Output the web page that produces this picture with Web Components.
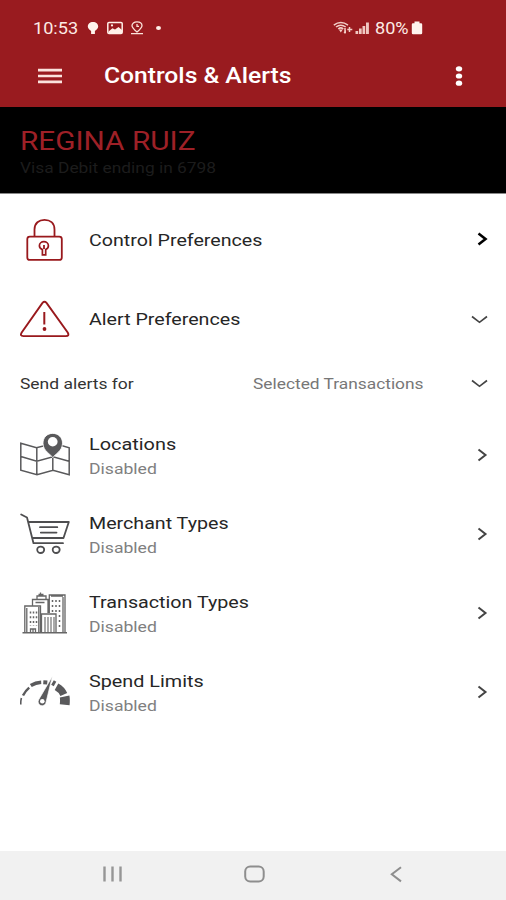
<!DOCTYPE html>
<html lang="en">
<head>
<meta charset="utf-8">
<title>Controls &amp; Alerts</title>
<style>
html, body { margin: 0; height: 100%; background: #fff; font-family: Roboto, "Liberation Sans", sans-serif; }
</style>
</head>
<body>
<phone-screen></phone-screen>
<script>
const define = (name, html, setup) => customElements.define(name, class extends HTMLElement {
  connectedCallback() {
    if (this.shadowRoot) return;
    const t = document.createElement('template');
    t.innerHTML = typeof html === 'function' ? html(this) : html;
    this.attachShadow({ mode: 'open' }).append(t.content.cloneNode(true));
    if (setup) setup(this);
  }
});

// A single line of text, widened to the width given in the w attribute.
define('wide-text', `<style>
  :host { display: block; flex: none; white-space: nowrap; line-height: 24px; }
  span { display: inline-block; transform-origin: 0 50%; vertical-align: top; }
</style><span><slot></slot></span>`, el => {
  const w = +el.getAttribute('w');
  const span = el.shadowRoot.querySelector('span');
  el.style.width = w + 'px';
  span.style.transform = `scaleX(${w / span.offsetWidth})`;
});

const icons = {
  lock: [50, 50, `<g fill="none" stroke="#99191d" stroke-width="1.8"><path d="M14.500 20V13.500C14.500 7 19 3.800 24.500 3.800S34.500 7 34.500 13.500V20"/><rect x="7.300" y="20.600" width="34.500" height="23.300" rx="2.500"/><path stroke-width="1.700" d="M22.400 33.600c-2-.9-3-2.400-3-3.900 0-2.400 2-4 4.500-4s4.500 1.600 4.500 4c0 1.500-.9 3-2.700 3.900v5.200h-3.300z"/><path d="M24 29v4"/></g>`],
  warning: [50, 50, `<path d="M22.500 7.900Q24.500 5.700 26.500 7.900L47.700 37.500Q49.700 41.100 45.800 41.100H3.400Q-.5 41.100 1.700 37.500Z" fill="none" stroke="#99191d" stroke-width="1.900"/><path d="M24.300 17v12.500" stroke="#99191d" stroke-width="2"/><circle cx="24.500" cy="34" r="1.900" fill="#99191d"/>`],
  map: [50, 50, `<g transform="translate(0 3.700)"><g fill="none" stroke="#59595b" stroke-width="1.500"><path d="M.8 9.500 16.500 14 34 9.500 49.200 14V41L33 36.500 17 41 .8 36.500ZM16.800 14V41M32.800 24V37M.8 22.800 16.800 27.500 33 23 49 27.500"/></g><path d="M32.800 24C31 20.500 23 17.500 23 9.500 23 3.500 27.300-.3 32.700-.3S42.500 3.500 42.500 9.500C42.500 17.500 34.600 20.500 32.800 24Z" fill="#59595b" stroke="#fff" stroke-width=".8"/><ellipse cx="32.700" cy="8" rx="4.900" ry="4.700" fill="#fff"/></g>`],
  cart: [50, 50, `<g fill="none" stroke="#4e4e50" stroke-width="1.800" stroke-linecap="round" stroke-linejoin="round"><path d="M1.200 5.500 7 8.500 13.500 34.200H43M8.300 13H48.800L43.500 29H12.800M20 18.200H37.300M20.800 23.600H36.500"/><ellipse cx="20.700" cy="40.800" rx="3.500" ry="3.200"/><ellipse cx="36.200" cy="40.800" rx="3.500" ry="3.200"/></g>`],
  city: [50, 50, `<g fill="none" stroke="#666" stroke-width="1.300"><path d="M2.500 44.800H47" stroke-width="1.600"/><path d="M4.800 44V18H20.500V44M6.800 44V20M18.800 44V19M12.500 17.500V11.500H28V25M17 11V8H26V11M20.500 8V4.500M18.500 6.500h5M29.300 25V7H45V44M43 44V9M31 8h12M21.500 44V26H36V44M15.500 14.500h9"/><path d="M25 29V44M28 29V44M31 29V44M34 29V44" stroke-width="1.100"/><path d="M10.500 23.500V38M13.500 23.500V38M16.500 23.500V38" stroke-dasharray="2 2.700" stroke-width="1.500"/><path d="M32.500 12v12M36 12v12M39.500 12v30" stroke-dasharray="2 3" stroke-width="1.500"/><path d="M10.500 44V41h5v3M13 41v3"/></g>`],
  gauge: [50, 50, `<g fill="none" stroke="#5a5a5c"><path d="M.8 37.500Q.6 34 1.400 31" stroke-width="1.600"/><path d="M3 28.500Q5.500 23.700 9.200 20.600" stroke-width="2.500"/><path d="M10.800 18.500Q15.500 15.500 21.200 15.200" stroke-width="3.500"/><path d="M23.300 15.200 27.300 15.500" stroke-width="3.900"/><path d="M32.500 15.500 35 17" stroke-width="5"/><path d="M36.500 19.800Q41.500 22.500 43.800 27.500" stroke-width="7.500"/><path d="M44.600 29.500Q45.200 32.500 44.700 37.700" stroke-width="9.800"/></g><path d="M32.300 9.500 18.800 32.500a4 4 0 1 0 7.300 2.500Z" fill="#5a5a5c" stroke="#fff" stroke-width=".7"/><circle cx="22.300" cy="34.300" r="2.300" fill="#fff"/>`],
  right: [18, 18, `<path d="M6.500 3.500 13.500 9 6.500 14.500" fill="none" stroke="currentColor" stroke-width="var(--weight, 2)"/>`],
  down: [18, 18, `<path d="M2 5.500 9.500 11.300 17 5.500" fill="none" stroke="currentColor" stroke-width="1.700"/>`],
  menu: [24, 16, `<path d="M0 2.200H24M0 8H24M0 13.800H24" stroke="#fbe3dd" stroke-width="2.700"/>`],
  more: [8, 24, `<g fill="#fff"><ellipse cx="4" cy="4.800" rx="3.200" ry="2.600"/><ellipse cx="4" cy="12" rx="3.200" ry="2.600"/><ellipse cx="4" cy="19.200" rx="3.200" ry="2.600"/></g>`],
  bulb: [12, 16, `<path d="M6 2C2.900 2 .8 4 .8 6.600c0 2 1.700 3.200 3.300 4.400V14h3.800v-3c1.600-1.200 3.300-2.400 3.300-4.400C11.200 4 9.100 2 6 2Z" fill="#fff3eb"/>`],
  picture: [16, 16, `<rect x=".8" y="2.400" width="14.400" height="11" rx="1.200" fill="none" stroke="#fff0e8" stroke-width="1.500"/><path d="M1.500 11.500 5.500 8.200 8 9.400 11.500 7 15 10v3H1.500Z" fill="#fff0e8"/><circle cx="5" cy="5.400" r="1.100" fill="#fff0e8"/>`],
  place: [14, 16, `<g fill="none" stroke="#fbe3da" stroke-width="1.300"><path d="M7 12C3.500 9 2 7.500 2 5.700 2 3.500 4 1.800 7 1.800s5 1.700 5 3.900C12 7.500 10.500 9 7 12ZM1 13.600H13"/><path d="M7 3.900v2.500h2"/></g>`],
  wifi: [20, 16, `<g fill="none" stroke="#f3cfc8" stroke-width="1.500"><path d="M.8 5.200Q7.800 0 15 5.200M3 7Q7.800 3.300 12.700 7M5.200 9Q7.800 6.800 10.300 9"/></g><path d="M5.800 9.500H9.800L7.800 12.500ZM10.500 13 13 9.500V13Z" fill="#f3cfc8"/><path d="M12 8v5.500M16.500 7v5M14.300 9.500h5" stroke="#f3cfc8" stroke-width="1.500"/>`],
  signal: [15, 16, `<g fill="#f0c8c1"><path d="M.5 11h2.700v3H.5zM4 8.500h2.700V14H4zM7.500 6h2.700v8H7.500zM11 2.500h2.900v11.500h-2.900z"/></g>`],
  battery: [12, 16, `<path d="M3.500 1.500h5v1.700h1.500q1.200 0 1.200 1.200V13q0 1.200-1.200 1.200H2Q.8 14.200.8 13V4.400Q.8 3.200 2 3.200h1.500Z" fill="#fff5ef"/>`],
  recents: [20, 18, `<path d="M2.500 1.500V16.500M10.500 1.500V16.500M18.500 1.500V16.500" stroke="#969696" stroke-width="2.400"/>`],
  home: [22, 20, `<rect x="2.200" y="2.600" width="18.500" height="15" rx="5" fill="none" stroke="#8e8e8e" stroke-width="2"/>`],
  back: [12, 18, `<path d="M11 2.200 1.800 9.300 11 16.400" fill="none" stroke="#8e8e8e" stroke-width="2"/>`]
};
define('app-icon', el => {
  const [w, h, body] = icons[el.getAttribute('name')];
  return `<style>:host{display:block;flex:none;width:${w}px;height:${h}px}svg{display:block}</style>
  <svg width="${w}" height="${h}" viewBox="0 0 ${w} ${h}">${body}</svg>`;
});

define('status-bar', `<style>
  :host { display: flex; align-items: center; height: 24px; padding: 16px 83px 0 33px; color: #fdebe5; font-size: 16.5px; }
  .left, .right { display: flex; align-items: center; }
  .right { margin-left: auto; }
  wide-text { padding-top: 1px; }
  .dot { width: 5px; height: 4px; border-radius: 50%; background: #fff0e8; margin-left: 12px; }
</style>
<div class="left"><wide-text w="45">10:53</wide-text>
<app-icon name="bulb" style="margin-left:9px"></app-icon>
<app-icon name="picture" style="margin-left:8px"></app-icon>
<app-icon name="place" style="margin-left:7px"></app-icon>
<div class="dot"></div></div>
<div class="right"><app-icon name="wifi"></app-icon>
<app-icon name="signal" style="margin-left:2px"></app-icon>
<wide-text w="34" style="margin-left:5px">80%</wide-text>
<app-icon name="battery" style="margin-left:2px"></app-icon></div>`);

define('title-bar', `<style>
  :host { display: flex; align-items: center; height: 46px; padding: 13px 43px 7px 38px; color: #fff; }
  wide-text { margin-left: 42px; font-size: 22px; font-weight: 500; }
  .more { margin-left: auto; }
</style>
<app-icon name="menu"></app-icon><wide-text w="187">Controls &amp; Alerts</wide-text><app-icon class="more" name="more"></app-icon>`);

define('card-banner', `<style>
  :host { display: block; box-sizing: border-box; height: 87px; padding: 21px 20px 0; background: #000; border-bottom: 1px solid #888; }
  .name { color: #9e2027; font-size: 25px; line-height: 28px; }
  .card { color: #1c1c1c; font-size: 15.5px; line-height: 24px; }
</style>
<wide-text class="name" w="175">REGINA RUIZ</wide-text>
<wide-text class="card" w="196">Visa Debit ending in 6798</wide-text>`);

define('menu-row', el => `<style>
  :host { display: flex; align-items: center; height: 79px; padding: 0 16px 0 20px; font-size: 16px; color: #262626; }
  .text { margin-left: 19px; }
  .arrow { margin-left: auto; color: #444; }
  :host([strong]) .arrow { color: #000; --weight: 2.6; }
  :host([strong]) .arrow, :host([sub]) app-icon { padding-bottom: 3px; }
  ::slotted([slot=detail]) { font-size: 15px; color: #808080; }
</style>
<app-icon name="${el.getAttribute('icon')}"></app-icon>
<div class="text"><slot></slot><slot name="detail"></slot></div>
<app-icon class="arrow" name="${el.getAttribute('arrow') || 'right'}"></app-icon>`);

define('select-row', `<style>
  :host { display: flex; align-items: center; height: 48px; padding: 0 18px 0 20px; margin-bottom: 9px; font-size: 15px; color: #333; }
  .value { margin-left: 119px; color: #777; }
  app-icon { margin-left: auto; color: #444; }
</style>
<wide-text w="114">Send alerts for</wide-text><wide-text class="value" w="171">Selected Transactions</wide-text><app-icon name="down"></app-icon>`);

define('system-nav', `<style>
  :host { display: grid; grid-template-columns: 142px 142px 142px; justify-content: center; justify-items: center; align-items: center; box-sizing: border-box; height: 49px; padding: 0 0 3px 2px; background: #f1f1f1; }
</style>
<app-icon name="recents"></app-icon><app-icon name="home"></app-icon><app-icon name="back"></app-icon>`);

define('phone-screen', `<style>
  :host { display: flex; flex-direction: column; width: 506px; height: 900px; background: #fff; overflow: hidden; }
  header { background: #991b1f; height: 107px; flex: none; }
  main { flex: 1; padding-top: 7px; }
</style>
<header><status-bar></status-bar><title-bar></title-bar></header>
<card-banner></card-banner>
<main>
  <menu-row icon="lock" strong><wide-text w="173">Control Preferences</wide-text></menu-row>
  <menu-row icon="warning" arrow="down" style="padding-right:18px;height:80px"><wide-text w="151">Alert Preferences</wide-text></menu-row>
  <select-row></select-row>
  <menu-row sub icon="map"><wide-text w="87">Locations</wide-text><wide-text slot="detail" w="68">Disabled</wide-text></menu-row>
  <menu-row sub icon="cart"><wide-text w="140">Merchant Types</wide-text><wide-text slot="detail" w="68">Disabled</wide-text></menu-row>
  <menu-row sub icon="city"><wide-text w="160">Transaction Types</wide-text><wide-text slot="detail" w="68">Disabled</wide-text></menu-row>
  <menu-row sub icon="gauge"><wide-text w="115">Spend Limits</wide-text><wide-text slot="detail" w="68">Disabled</wide-text></menu-row>
</main>
<system-nav></system-nav>`);
</script>
</body>
</html>
